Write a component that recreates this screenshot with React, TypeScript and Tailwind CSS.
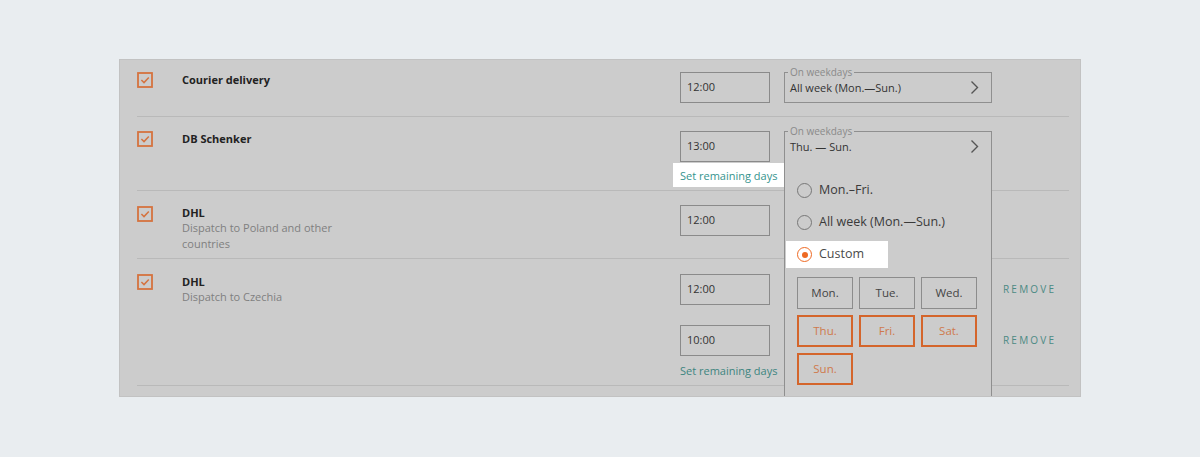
import React from "react";

function CheckBox() {
  return (
    <svg width="16" height="16" viewBox="0 0 16 16" className="block">
      <rect x="1" y="1" width="14" height="14" fill="none" stroke="#d5733f" strokeWidth="1.8" />
      <path d="M4.4 8 L7 10.6 L11.8 5.4" fill="none" stroke="#d5733f" strokeWidth="1.5" />
    </svg>
  );
}

function Chevron() {
  return (
    <svg width="9" height="15" viewBox="0 0 9 15" className="block">
      <path d="M1.5 1.5 L7.5 7.5 L1.5 13.5" fill="none" stroke="#555555" strokeWidth="1.4" />
    </svg>
  );
}

function TimeInput({ value }: { value: string }) {
  return (
    <div className="flex h-[31px] w-[90px] shrink-0 items-center border border-[#8a8a8a] pl-[6px] text-[11px] text-[#333333]">
      {value}
    </div>
  );
}

function WeekSelect({ value, children }: { value: string; children?: React.ReactNode }) {
  return (
    <div className="relative ml-[14px] flex h-[31px] w-[208px] shrink-0 items-center justify-between border border-[#8f8f8f] pl-[5px] pr-[12px] text-[11px] text-[#333333]">
      <span className="absolute left-[3px] top-[-8px] bg-[#cccccc] px-[2px] text-[10px] leading-[14px] text-[#8a8a8a]">
        On weekdays
      </span>
      <span className="pt-[2px]">{value}</span>
      <Chevron />
      {children}
    </div>
  );
}

function Radio({ label, checked }: { label: string; checked?: boolean }) {
  return (
    <div
      className={
        checked
          ? "ml-[1px] flex h-[27px] w-[102px] items-center gap-[7px] bg-white pl-[11px] text-[12.5px] text-[#4a4a4a]"
          : "ml-[1px] flex h-[27px] w-[190px] items-center gap-[7px] pl-[11px] text-[12.5px] text-[#3a3a3a]"
      }
    >
      {checked ? (
        <span className="flex h-[15px] w-[15px] items-center justify-center rounded-full border-[1.5px] border-[#ee6a24]">
          <span className="h-[6px] w-[6px] rounded-full bg-[#ee6a24]" />
        </span>
      ) : (
        <span className="h-[15px] w-[15px] rounded-full border-[1.5px] border-[#777777]" />
      )}
      <span>{label}</span>
    </div>
  );
}

const days = [
  { d: "Mon.", on: false },
  { d: "Tue.", on: false },
  { d: "Wed.", on: false },
  { d: "Thu.", on: true },
  { d: "Fri.", on: true },
  { d: "Sat.", on: true },
  { d: "Sun.", on: true },
];

function Dropdown() {
  return (
    <div className="absolute left-[-1px] top-full z-10 h-[240px] w-[208px] border-x border-[#8f8f8f] bg-[#cccccc] pt-[16px]">
      <div className="flex flex-col gap-[5px]">
        <Radio label="Mon.–Fri." />
        <Radio label="All week (Mon.—Sun.)" />
        <Radio label="Custom" checked />
      </div>
      <div className="mt-[9px] grid w-[192px] grid-cols-3 gap-x-[6px] gap-y-[6px] pl-[12px]">
        {days.map((x) =>
          x.on ? (
            <div
              key={x.d}
              className="flex h-[32px] w-[56px] items-center justify-center border-2 border-[#d4652b] text-[11.5px] text-[#cf7a4c]"
            >
              {x.d}
            </div>
          ) : (
            <div
              key={x.d}
              className="flex h-[32px] w-[56px] items-center justify-center border-[1.5px] border-[#8c8c8c] text-[11.5px] text-[#444444]"
            >
              {x.d}
            </div>
          )
        )}
      </div>
    </div>
  );
}

function Name({ title, sub }: { title: string; sub?: string }) {
  return (
    <div className="w-[498px] shrink-0">
      <div className="pt-[1px] text-[11px] font-bold leading-[14px] text-[#222222]">{title}</div>
      {sub && (
        <div className="max-w-[170px] text-[11px] leading-[16px] text-[#7f7f7f]">{sub}</div>
      )}
    </div>
  );
}

function Remove() {
  return (
    <span className="ml-[11px] text-[10px] tracking-[2.2px] text-[#4b8a84]">REMOVE</span>
  );
}

export default function App() {
  return (
    <div className="h-[457px] w-[1200px] bg-[#e9edf0] pt-[59px] font-['Open_Sans',sans-serif]">
      <div className="ml-[119px] h-[338px] w-[962px] overflow-hidden border border-[#c2c2c2] bg-[#cccccc]">
        <div className="ml-[17px] mr-[11px]">
          {/* Courier delivery */}
          <div className="flex h-[57px] items-start border-b border-[#b9b9b9] pt-[12px]">
            <div className="w-[45px] shrink-0">
              <CheckBox />
            </div>
            <Name title="Courier delivery" />
            <TimeInput value="12:00" />
            <WeekSelect value="All week (Mon.—Sun.)" />
          </div>

          {/* DB Schenker */}
          <div className="flex h-[74px] items-start border-b border-[#b9b9b9] pt-[14px]">
            <div className="w-[45px] shrink-0">
              <CheckBox />
            </div>
            <Name title="DB Schenker" />
            <div className="flex w-[90px] shrink-0 flex-col">
              <TimeInput value="13:00" />
              <div className="ml-[-7px] mt-[1px] flex h-[24px] w-[111px] shrink-0 items-center bg-white pl-[7px] pt-[2px] text-[11px] text-[#35948e]">
                Set remaining days
              </div>
            </div>
            <WeekSelect value="Thu. — Sun.">
              <Dropdown />
            </WeekSelect>
          </div>

          {/* DHL Poland */}
          <div className="flex h-[68px] items-start border-b border-[#b9b9b9] pt-[14px]">
            <div className="w-[45px] shrink-0 pt-[1px]">
              <CheckBox />
            </div>
            <Name title="DHL" sub="Dispatch to Poland and other countries" />
            <TimeInput value="12:00" />
          </div>

          {/* DHL Czechia */}
          <div className="flex h-[127px] items-start border-b border-[#b9b9b9] pt-[15px]">
            <div className="w-[45px] shrink-0">
              <CheckBox />
            </div>
            <Name title="DHL" sub="Dispatch to Czechia" />
            <div className="flex flex-col">
              <div className="flex items-center">
                <TimeInput value="12:00" />
                <div className="ml-[14px] w-[208px] shrink-0" />
                <Remove />
              </div>
              <div className="mt-[20px] flex items-center">
                <TimeInput value="10:00" />
                <div className="ml-[14px] w-[208px] shrink-0" />
                <Remove />
              </div>
              <div className="mt-[3px] flex h-[24px] items-center text-[11px] text-[#3d8580]">
                Set remaining days
              </div>
            </div>
          </div>
        </div>
      </div>
    </div>
  );
}
